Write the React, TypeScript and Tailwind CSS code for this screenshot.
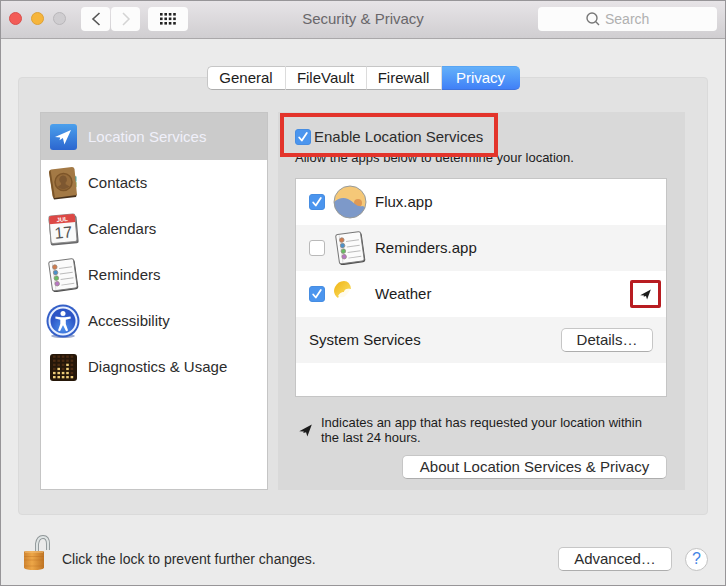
import * as React from "react";
import { clsx } from "clsx";

function LocationArrow({ className }: { className?: string }) {
  return (
    <svg viewBox="0 0 14 14" className={className} aria-hidden="true">
      <path d="M13.800 0.500 9 13.500 7.600 8.800 4.600 9.800 5.200 8.200 0.300 7.800Z" fill="currentColor" />
    </svg>
  );
}

function LocationIcon() {
  return (
    <svg viewBox="0 0 34 34" className="size-[34px]" aria-hidden="true">
      <defs>
        <linearGradient id="loc-blue" x1="0" y1="0" x2="0" y2="1">
          <stop offset="0" stopColor="#4ba0ec" />
          <stop offset="1" stopColor="#2c66cf" />
        </linearGradient>
      </defs>
      <rect x="4" y="4" width="27" height="26" rx="3" fill="url(#loc-blue)" />
      <path d="m25 10-6.600 14.500-1.500-6.500-3.400 2.300.7-2.800L9 17Z" fill="#fff" />
    </svg>
  );
}

function ContactsIcon() {
  return (
    <svg viewBox="0 0 34 34" className="size-[34px]" aria-hidden="true">
      <path d="m27 9 3 1-.5 5 1 2-1 11-3 1Z" fill="#d9c9a0" />
      <path d="m27 10 3.500.5v5l-3 1Z" fill="#4fa5a8" />
      <path d="m27.500 17 3-1v5l-3 1Z" fill="#78a85c" />
      <path d="m7 31 1 2.500 22-2.500 1-3Z" fill="#46311c" />
      <path d="M5 3.500 26 1q2 0 2.500 2L31 29 8.500 32Q7 32 6.500 30L3 6Q3 4 5 3.500Z" fill="#a37945" />
      <path d="M3 6 4.500 4 9 32 7 31Z" fill="#7b5529" />
      <circle cx="17.500" cy="16" r="8.500" fill="#976c3b" stroke="#7d5529" strokeWidth="1.500" />
      <path d="M17.500 9.500a3.500 4 0 0 1 2 7.200l.2 1.600 4 2.200q-6 5-12.400.6l3.800-2.600v-1.600a3.500 4 0 0 1 2.400-7.400Z" fill="#7d5730" />
    </svg>
  );
}

function CalendarIcon() {
  return (
    <svg viewBox="0 0 34 34" className="size-[34px]" aria-hidden="true">
      <g transform="rotate(-5 17 17)">
        <rect x="3.500" y="4.500" width="28" height="28" rx="2" fill="#68686a" />
        <rect x="4" y="3" width="26" height="27.500" rx="2" fill="#fafafa" stroke="#8d8d8d" />
        <path d="M4 11V5q0-2 2-2h22q2 0 2 2v6Z" fill="#dd4845" />
        <text x="17" y="9.500" textAnchor="middle" fontSize="6" fontWeight="bold" fontFamily="Liberation Sans" fill="#fff">JUL</text>
        <text x="17" y="26" textAnchor="middle" fontSize="16" fontFamily="Liberation Sans" fill="#555">17</text>
      </g>
    </svg>
  );
}

const reminderDots = ["#d17b4c", "#4b91ca", "#66bc62", "#b875c4"];

function RemindersIcon() {
  return (
    <svg viewBox="0 0 34 34" className="size-[34px]" aria-hidden="true">
      <g transform="rotate(-8 17 17)">
        <rect x="5" y="3" width="25.500" height="30" rx="2.500" fill="#4e4e4e" />
        <rect x="4.500" y="2" width="25" height="29.500" rx="2" fill="#fbfbfb" stroke="#777" />
        <path d="M8 3v28" stroke="#dedede" />
        {reminderDots.map((color, i) => (
          <g key={color}>
            <circle cx="10" cy={8 + i * 5.6} r="2.300" fill={color} stroke="#92877f" strokeWidth=".7" />
            <path d={`M14 ${10 + i * 5.6}h13`} stroke="#bbb" />
          </g>
        ))}
      </g>
    </svg>
  );
}

function AccessibilityIcon() {
  return (
    <svg viewBox="0 0 34 34" className="size-[34px]" aria-hidden="true">
      <defs>
        <radialGradient id="acc-blue" cy=".75">
          <stop offset="0" stopColor="#4e91ec" />
          <stop offset="1" stopColor="#2c55c6" />
        </radialGradient>
      </defs>
      <ellipse cx="17" cy="32" rx="12" ry="2" fill="#9facd0" />
      <circle cx="17" cy="17" r="16.500" fill="#3560c8" />
      <circle cx="17" cy="17" r="13.500" fill="url(#acc-blue)" stroke="#e8f0ff" strokeWidth="2" />
      <circle cx="17" cy="9.500" r="2.500" fill="#fff" />
      <path d="m9.500 12.500 5.500.8h4l5.500-.8.300 2-5 1.200V20l2.300 6.500-2 .8-2.900-5.800h-.4L14 27.300l-2-.8 2.300-6.500v-4.300l-5-1.200Z" fill="#fff" />
    </svg>
  );
}

// lit cells of each column, numbered from the bottom
const levels = [[0, 1], [0, 1, 2], [0, 1], [0, 1, 2, 3], [0]];

function DiagnosticsIcon() {
  return (
    <svg viewBox="0 0 34 34" className="size-[34px]" aria-hidden="true">
      <rect x="4" y="4" width="27" height="27" rx="3" fill="#251709" />
      {levels.map((lit, col) =>
        [0, 1, 2, 3, 4, 5].map((row) => (
          <rect
            key={`${col}-${row}`}
            x={7 + col * 4.4}
            y={26 - row * 4.1}
            width="2.600"
            height="2.300"
            fill={lit.includes(row) ? "#eccb78" : "#4b2b12"}
          />
        ))
      )}
    </svg>
  );
}

function FluxIcon() {
  return (
    <svg viewBox="0 0 34 34" className="size-[34px]" aria-hidden="true">
      <defs>
        <clipPath id="flux-disc">
          <circle cx="17" cy="17" r="16" />
        </clipPath>
      </defs>
      <g clipPath="url(#flux-disc)">
        <path d="M0 0h34v34H0Z" fill="#f5c878" />
        <circle cx="25" cy="18" r="4" fill="#df9955" />
        <path d="M0 18Q7 11 15 14q4 2 7 5t8 2l4 3v10H0Z" fill="#7d99c9" />
      </g>
      <circle cx="17" cy="17" r="16" fill="none" stroke="#979b9c" />
    </svg>
  );
}

function WeatherIcon() {
  return (
    <svg viewBox="0 0 34 34" className="size-[34px]" aria-hidden="true">
      <defs>
        <linearGradient id="sun-gold" x1="0" y1="0" x2="1" y2="1">
          <stop offset=".2" stopColor="#f2bd25" />
          <stop offset="1" stopColor="#fae36b" />
        </linearGradient>
      </defs>
      <path d="M5 21Q-1 16 2 10 5 4 11 4q6 0 7 8-5-1-7 3-3 0-6 6Z" fill="url(#sun-gold)" />
      <path d="M11 15q1-4 6-3-1 4-6 8-4 1-6-1 2-4 6-4Z" fill="#fffbee" />
    </svg>
  );
}

function LockIcon() {
  return (
    <svg viewBox="0 0 28 36" className="h-[36px] w-[28px]" aria-hidden="true">
      <defs>
        <linearGradient id="lock-brass">
          <stop offset="0" stopColor="#cf8430" />
          <stop offset=".4" stopColor="#eda748" />
          <stop offset="1" stopColor="#bf7424" />
        </linearGradient>
      </defs>
      <path d="M15 17V9q1-7 6-7t5 7v6" fill="none" stroke="#8d9496" strokeWidth="4" />
      <path d="M15 17V9q1-7 6-7t5 7v6" fill="none" stroke="#dfe4e4" strokeWidth="2.200" />
      <path d="M2 17q0-1 2-1h16q2 0 2 1v16q-2 2-10 2T2 33Z" fill="url(#lock-brass)" />
      <path d="M2 21.500h20M2 25h20M2 31h20" stroke="#b6681d" strokeOpacity=".35" />
      <path d="M3 17h18" stroke="#f6c27b" />
    </svg>
  );
}

interface CheckboxProps {
  id: string;
  defaultChecked?: boolean;
}

function Checkbox({ id, defaultChecked }: CheckboxProps) {
  return (
    <span className="grid size-4 shrink-0">
      <input
        id={id}
        type="checkbox"
        defaultChecked={defaultChecked}
        className="peer col-start-1 row-start-1 size-4 appearance-none rounded-[3px] border border-[#b9b9b9] bg-white checked:border-[#468de2] checked:bg-[#4b95ee]"
      />
      <svg
        viewBox="0 0 16 16"
        className="pointer-events-none invisible col-start-1 row-start-1 size-4 peer-checked:visible"
        aria-hidden="true"
      >
        <path d="m4.200 8.500 2.600 3 5-7.500" fill="none" stroke="#fff" strokeWidth="1.800" strokeLinecap="round" strokeLinejoin="round" />
      </svg>
    </span>
  );
}

interface PushButtonProps {
  children: React.ReactNode;
  className?: string;
}

function PushButton({ children, className }: PushButtonProps) {
  return (
    <button
      type="button"
      className={clsx(
        "h-6 rounded-[5px] border border-[#c6c6c6] border-b-[#adadad] bg-white text-[15px] leading-5 whitespace-nowrap text-[#2c2c2c]",
        className
      )}
    >
      {children}
    </button>
  );
}

function TitleBar() {
  return (
    <header className="grid h-[38px] grid-cols-[1fr_auto_1fr] items-center border-b border-[#aaa8aa] bg-linear-to-b from-[#e7e4e7] to-[#d0ced1] px-2 pb-[2px]">
      <div className="flex items-center">
        <div className="flex gap-[9px]">
          <button type="button" aria-label="Close" className="size-[13px] rounded-full border border-[#d94f4c] bg-[#f35c57]" />
          <button type="button" aria-label="Minimize" className="size-[13px] rounded-full border border-[#dda136] bg-[#f6b53b]" />
          <button type="button" aria-label="Zoom" className="size-[13px] rounded-full border border-[#b9b7ba] bg-[#cfcdd0]" />
        </div>
        <div className="ml-[15px] flex gap-px">
          <button type="button" aria-label="Back" className="grid h-6 w-[29px] place-items-center rounded-[4px] bg-[#fcfcfc]">
            <svg viewBox="0 0 10 14" className="h-[14px] w-[10px]">
              <path d="M8.500 1 2 7l6.500 6" fill="none" stroke="#555" strokeWidth="1.600" />
            </svg>
          </button>
          <button type="button" aria-label="Forward" className="grid h-6 w-[29px] place-items-center rounded-[4px] bg-[#fcfcfc]">
            <svg viewBox="0 0 10 14" className="h-[14px] w-[10px]">
              <path d="m2 1 6 6-6 6" fill="none" stroke="#d4d4d4" strokeWidth="1.500" />
            </svg>
          </button>
        </div>
        <button type="button" aria-label="Show all" className="ml-2 grid h-6 w-10 place-items-center rounded-[4px] bg-[#fcfcfc]">
          <svg viewBox="0 0 16 12" className="h-3 w-4" fill="#222">
            {[0, 1, 2].map((row) =>
              [0, 1, 2, 3].map((col) => (
                <rect key={`${row}-${col}`} x={col * 4.4} y={row * 4.5} width="2.600" height="2.600" />
              ))
            )}
          </svg>
        </button>
      </div>
      <h1 className="text-[15px] leading-5 text-[#69676a]">Security &amp; Privacy</h1>
      <label className="flex h-6 w-[179px] items-center justify-self-end rounded-[4px] bg-[#fcfcfc] pl-12">
        <svg viewBox="0 0 14 14" className="size-[14px] shrink-0" aria-hidden="true">
          <path d="M9.600 9.600 13 13M11 6A5 5 0 1 1 1 6a5 5 0 0 1 10 0Z" fill="none" stroke="#777" strokeWidth="1.400" />
        </svg>
        <input
          type="text"
          aria-label="Search"
          placeholder="Search"
          className="ml-[5px] w-full min-w-0 bg-transparent text-[14px] leading-5 outline-none placeholder:text-[#b0b0b0]"
        />
      </label>
    </header>
  );
}

const tabs = [
  { name: "General", width: "w-[79px]" },
  { name: "FileVault", width: "w-[81px]" },
  { name: "Firewall", width: "w-[75px]" },
  { name: "Privacy", width: "w-[78px]" },
];

function Tabs() {
  return (
    <div role="tablist" className="relative z-10 -mb-[13px] flex justify-center">
      {tabs.map(({ name, width }) => {
        const selected = name === "Privacy";
        return (
          <button
            key={name}
            type="button"
            role="tab"
            aria-selected={selected}
            className={clsx(
              "h-6 border-y text-[15px] leading-5 first:rounded-l-[5px] first:border-l last:rounded-r-[5px]",
              width,
              selected
                ? "border-t-[#58a5f4] border-b-[#3f73dd] bg-linear-to-b from-[#64b0f9] to-[#4180f7] text-white"
                : "border-r border-[#c6c6c6] border-r-[#dcdcdc] border-b-[#adadad] bg-white text-[#1c1c1c]"
            )}
          >
            {name}
          </button>
        );
      })}
    </div>
  );
}

const categories = [
  { name: "Location Services", Icon: LocationIcon },
  { name: "Contacts", Icon: ContactsIcon },
  { name: "Calendars", Icon: CalendarIcon },
  { name: "Reminders", Icon: RemindersIcon },
  { name: "Accessibility", Icon: AccessibilityIcon },
  { name: "Diagnostics & Usage", Icon: DiagnosticsIcon },
];

function Sidebar() {
  return (
    <ul className="w-[228px] shrink-0 border border-[#c5c5c5] bg-white">
      {categories.map(({ name, Icon }, i) => (
        <li key={name}>
          <button
            type="button"
            className={clsx(
              "flex w-full items-center gap-2 pl-[5px] text-left text-[15px] leading-5",
              i === 0 ? "h-[47px] bg-[#cbcbcb] text-[#f0f0fa]" : "h-[46px] text-[#2c2c2c]"
            )}
          >
            <Icon />
            {name}
          </button>
        </li>
      ))}
    </ul>
  );
}

const apps = [
  { id: "flux", name: "Flux.app", Icon: FluxIcon, allowed: true, recent: false },
  { id: "reminders", name: "Reminders.app", Icon: RemindersIcon, allowed: false, recent: false },
  { id: "weather", name: "Weather", Icon: WeatherIcon, allowed: true, recent: true },
];

function AppList() {
  return (
    <ul className="flex-1 border border-[#c5c5c5] bg-white text-[15px] leading-5 text-[#1c1c1c]">
      {apps.map(({ id, name, Icon, allowed, recent }) => (
        <li key={id} className="flex h-[46px] items-center pr-[5px] pl-[13px] even:bg-[#f4f4f4]">
          <Checkbox id={id} defaultChecked={allowed} />
          <label htmlFor={id} className="ml-2 flex flex-1 items-center gap-2">
            <Icon />
            {name}
          </label>
          {recent && (
            <span className="grid h-7 w-[31px] place-items-center rounded-[2px] border-3 border-[#b81c21]">
              <LocationArrow className="size-[11px]" />
            </span>
          )}
        </li>
      ))}
      <li className="flex h-[46px] items-center justify-between bg-[#f4f4f4] px-[13px]">
        System Services
        <PushButton className="w-[92px]">Details…</PushButton>
      </li>
    </ul>
  );
}

function LocationPane() {
  return (
    <section className="flex min-w-0 flex-1 flex-col bg-[#d9d9d9] pt-[15px] pr-[18px] pb-[11px] pl-[17px]">
      <div className="relative z-10 flex h-5 items-center self-start">
        <Checkbox id="enable" defaultChecked />
        <label htmlFor="enable" className="ml-[3px] text-[15px] leading-5 text-[#2c2c2c]">
          Enable Location Services
        </label>
        <span className="pointer-events-none absolute -inset-x-[15px] -top-[14px] -bottom-[10px] border-4 border-[#e3342b]" />
      </div>
      <p className="mt-[3px] text-[13px] leading-4 text-[#1c1c1c]">
        Allow the apps below to determine your location.
      </p>
      <div className="mt-3 flex flex-1 flex-col">
        <AppList />
      </div>
      <div className="mt-[18px] flex items-center pl-[4px] text-[13px] leading-[15px] text-[#1c1c1c]">
        <LocationArrow className="mr-[9px] size-[13px] shrink-0" />
        <p>
          Indicates an app that has requested your location within
          <br />
          the last 24 hours.
        </p>
      </div>
      <PushButton className="mt-[10px] w-[265px] self-end">About Location Services &amp; Privacy</PushButton>
    </section>
  );
}

export default function App() {
  return (
    <div className="flex min-h-screen flex-col border border-[#979598] bg-[#ebebeb] font-['Liberation_Sans',Arial,sans-serif]">
      <TitleBar />
      <main className="flex flex-1 flex-col px-[17px] pt-[27px]">
        <Tabs />
        <div className="flex flex-1 gap-[10px] rounded-[4px] border border-[#dadada] bg-[#e2e2e2] pt-[34px] pr-[22px] pb-6 pl-[21px]">
          <Sidebar />
          <LocationPane />
        </div>
      </main>
      <footer className="flex h-[70px] items-center pt-[18px] pr-[17px] pl-[21px]">
        <div className="-mt-3">
          <LockIcon />
        </div>
        <p className="ml-3 flex-1 text-[14px] leading-5 text-[#2c2c2c]">
          Click the lock to prevent further changes.
        </p>
        <PushButton className="w-[114px]">Advanced…</PushButton>
        <button
          type="button"
          aria-label="Help"
          className="ml-[13px] size-[23px] rounded-full border border-[#c2c2c2] bg-white text-[16px] leading-5 text-[#4384e5]"
        >
          ?
        </button>
      </footer>
    </div>
  );
}
